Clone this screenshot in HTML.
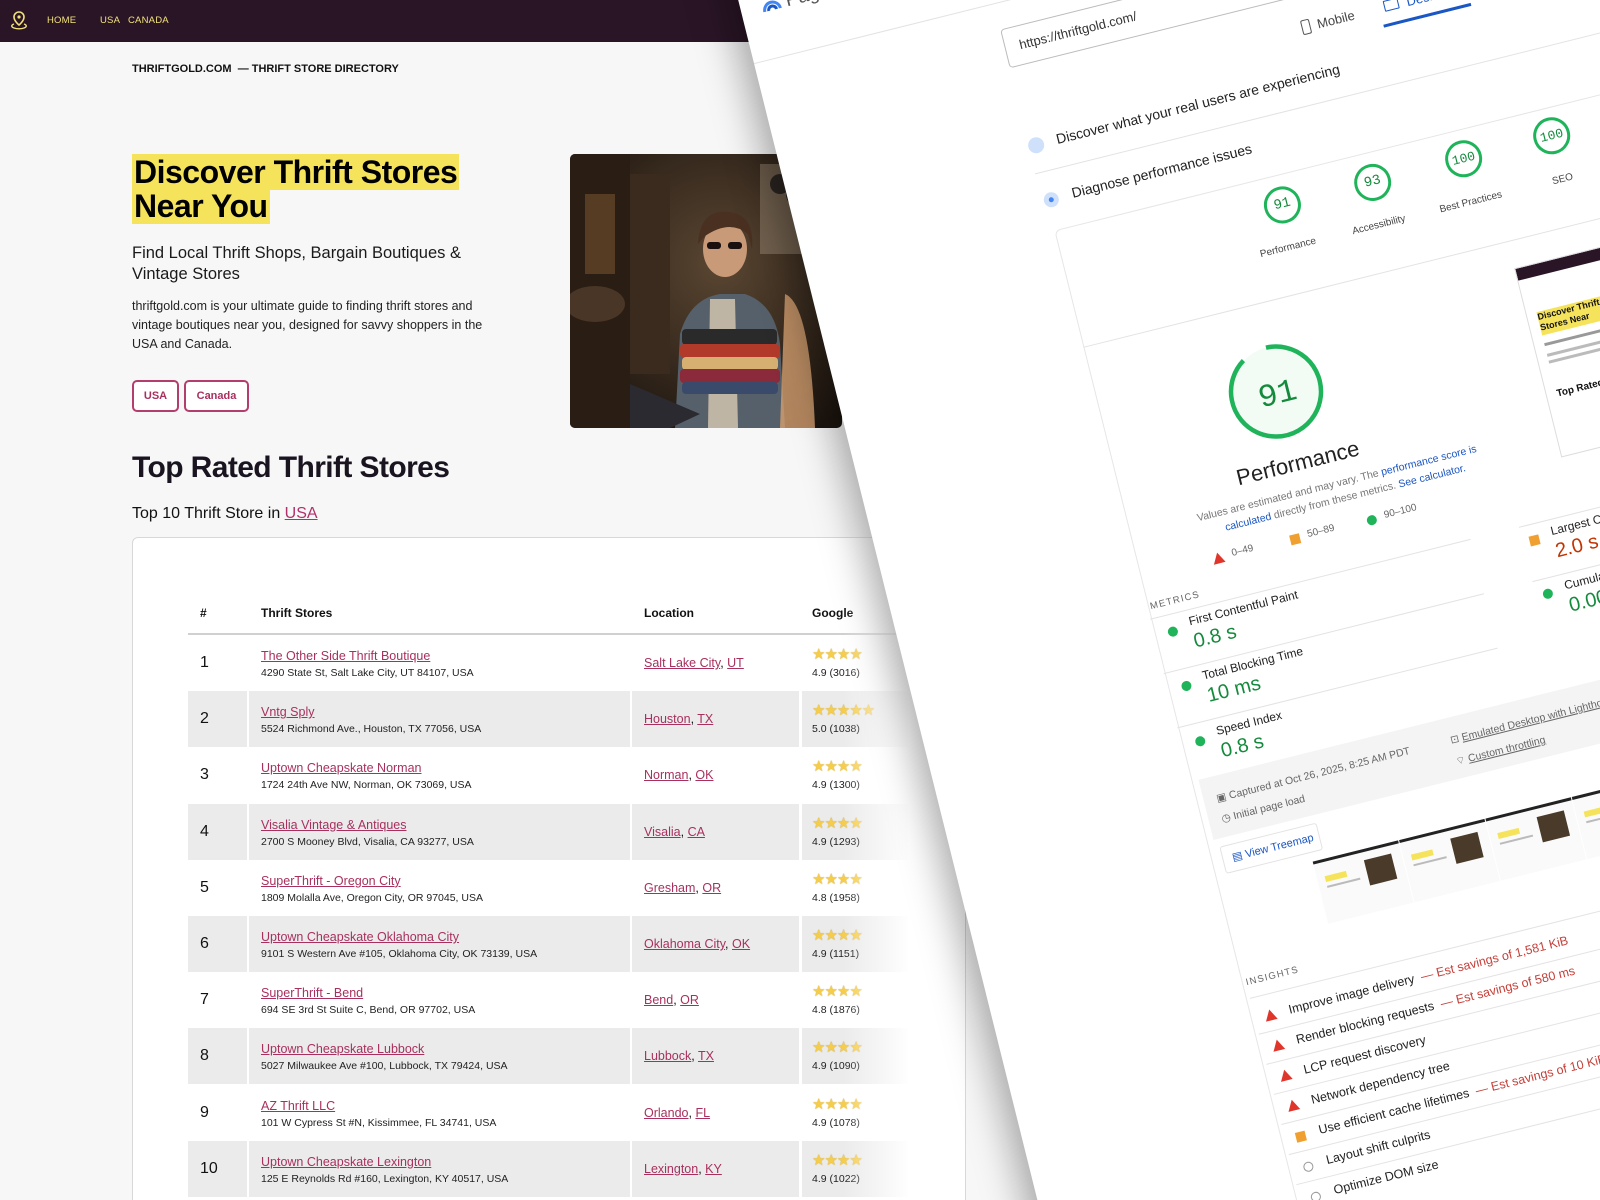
<!DOCTYPE html>
<html><head><meta charset="utf-8">
<style>
*{margin:0;padding:0;box-sizing:border-box}
html,body{width:1600px;height:1200px;overflow:hidden}
body{background:#f7f7f7;font-family:"Liberation Sans",sans-serif;color:#111}
#w{position:relative;width:1600px;height:1200px;overflow:hidden;background:#f7f7f7}
.a{position:absolute;white-space:nowrap}
.nav{position:absolute;left:0;top:0;width:1600px;height:42px;background:#2a1526}
.nav span{position:absolute;top:15px;font-size:9.5px;color:#f2e27a;letter-spacing:.2px}
.hl{background:#f6e35c}
.btn{position:absolute;top:380px;height:32px;border:2px solid #b33d6c;border-radius:5px;color:#a8305e;font-weight:bold;font-size:11px;text-align:center;line-height:28px;background:#fff}
.tcard{position:absolute;left:132px;top:537px;width:834px;height:663px;border:1px solid #d8d8d8;border-bottom:none;border-radius:6px 6px 0 0;background:#fff}
.row{position:absolute;left:188px;width:720px;height:56px}
.row.g .c{background:#ebebeb}
.c{position:absolute;top:0;height:56px}
.lk{color:#a8305e;text-decoration:underline;font-size:12.5px}
.ad{font-size:10.5px;color:#222}
.st{color:#f6cd4a;font-size:15px;letter-spacing:-1px;text-shadow:0 0 1px #b58a10}
.card{position:absolute;left:714px;top:-97px;width:1300px;height:1600px;background:#fff;transform-origin:0 0;transform:rotate(-14deg);box-shadow:-10px 0 40px rgba(0,0,0,.35)}
.card .a{color:#222}
.gz{position:absolute;border-radius:50%;border:3px solid #1fb35a;color:#148a3c;text-align:center;font-family:"Liberation Mono",monospace}
.dot{position:absolute;width:10px;height:10px;border-radius:50%;background:#1fb35a}
.tri{position:absolute;width:0;height:0;border-left:6px solid transparent;border-right:6px solid transparent;border-bottom:11px solid #e0352b}
.sq{position:absolute;width:10px;height:10px;background:#f0a030}
.ln{position:absolute;height:1px;background:#e3e3e3}
.sv{color:#c5403a}
.fr{position:absolute;top:1075px;width:88px;height:64px;background:#fafafa;border-top:3px solid #222}
.fr i{position:absolute;left:8px;top:14px;width:22px;height:6px;background:#f6e35c}
.fr b{position:absolute;left:50px;top:8px;width:28px;height:26px;background:#4a3a2a}
.fr u{position:absolute;left:8px;top:24px;width:34px;height:2px;background:#bbb}
</style></head><body><div id="w">

<div class="nav">
<svg style="position:absolute;left:9px;top:10px" width="20" height="22" viewBox="0 0 20 22"><path d="M10 2a5 5 0 0 0-5 5c0 4 5 8 5 8s5-4 5-8a5 5 0 0 0-5-5z" fill="none" stroke="#f2e27a" stroke-width="1.6"/><circle cx="10" cy="7" r="1.6" fill="#f2e27a"/><path d="M5 14c-3 1-3 3 0 4s7 1 10 0 3-3 0-4" fill="none" stroke="#f2e27a" stroke-width="1.4"/></svg>
<span style="left:47px">HOME</span><span style="left:100px">USA</span><span style="left:128px">CANADA</span>
</div>

<div class="a" style="left:132px;top:63px;font-size:11px;font-weight:bold;color:#111">THRIFTGOLD.COM &nbsp;— THRIFT STORE DIRECTORY</div>

<div class="a" style="left:132px;top:155px;font-size:32px;font-weight:900;line-height:34px;letter-spacing:-0.5px;color:#000">
<span class="hl" style="padding:0 2px">Discover Thrift Stores</span><br><span class="hl" style="padding:0 2px">Near You</span></div>

<div class="a" style="left:132px;top:243px;font-size:16.5px;line-height:21px;color:#1a1a1a">Find Local Thrift Shops, Bargain Boutiques &amp;<br>Vintage Stores</div>
<div class="a" style="left:132px;top:297px;font-size:12.5px;line-height:19px;color:#222">thriftgold.com is your ultimate guide to finding thrift stores and<br>vintage boutiques near you, designed for savvy shoppers in the<br>USA and Canada.</div>
<div class="btn" style="left:132px;width:47px">USA</div>
<div class="btn" style="left:184px;width:65px">Canada</div>

<svg style="position:absolute;left:570px;top:154px;border-radius:5px" width="272" height="274" viewBox="0 0 272 274">
<defs><radialGradient id="bg" cx="55%" cy="40%" r="70%"><stop offset="0" stop-color="#5a4632"/><stop offset="1" stop-color="#1c140e"/></radialGradient></defs>
<rect width="272" height="274" fill="url(#bg)"/>
<rect x="0" y="0" width="60" height="274" fill="#2a1d14"/>
<rect x="15" y="40" width="30" height="80" fill="#6a4a2a" opacity=".7"/>
<ellipse cx="25" cy="150" rx="30" ry="18" fill="#4a3626"/>
<rect x="60" y="20" width="40" height="200" fill="#3b2a1e"/>
<rect x="190" y="10" width="80" height="90" fill="#8a7a66" opacity=".6"/>
<circle cx="230" cy="40" r="14" fill="#1a1410"/><circle cx="210" cy="30" r="10" fill="#2a2420"/>
<path d="M105 274 L110 180 Q120 145 150 140 L175 140 Q205 150 210 190 L215 274Z" fill="#56606a"/>
<path d="M140 145 L165 145 L168 274 L138 274Z" fill="#bfb5a5"/>
<ellipse cx="155" cy="95" rx="22" ry="28" fill="#c89a78"/>
<path d="M128 90 Q130 55 158 58 Q185 60 182 95 L178 80 Q160 65 135 82Z" fill="#4a3020"/>
<rect x="137" y="88" width="14" height="7" rx="3" fill="#1a1010"/><rect x="158" y="88" width="14" height="7" rx="3" fill="#1a1010"/>
<rect x="112" y="175" width="95" height="16" rx="4" fill="#2a2a2a"/>
<rect x="110" y="190" width="100" height="14" rx="4" fill="#b23a2a"/>
<rect x="112" y="203" width="96" height="13" rx="4" fill="#d6b070"/>
<rect x="110" y="215" width="100" height="14" rx="4" fill="#8a2a3a"/>
<rect x="112" y="228" width="96" height="12" rx="4" fill="#3a4a6a"/>
<path d="M215 140 Q240 150 245 274 L210 274Z" fill="#d4a070" opacity=".8"/>
<path d="M60 230 L130 260 L100 274 L60 274Z" fill="#2a2a30"/>
</svg>

<div class="a" style="left:132px;top:451px;font-size:30px;font-weight:900;letter-spacing:-0.6px;color:#1a1320">Top Rated Thrift Stores</div>
<div class="a" style="left:132px;top:505px;font-size:16px;color:#111">Top 10 Thrift Store in <span style="color:#b0306a;text-decoration:underline">USA</span></div>

<div class="tcard"></div>
<div class="a" style="left:200px;top:606px;font-size:12px;font-weight:bold">#</div>
<div class="a" style="left:261px;top:606px;font-size:12px;font-weight:bold">Thrift Stores</div>
<div class="a" style="left:644px;top:606px;font-size:12px;font-weight:bold">Location</div>
<div class="a" style="left:812px;top:606px;font-size:12px;font-weight:bold">Google</div>
<div style="position:absolute;left:188px;top:633px;width:720px;height:2px;background:#d0d0d0"></div>

<div id="rows"></div>
<script>
var d=[["The Other Side Thrift Boutique","4290 State St, Salt Lake City, UT 84107, USA","Salt Lake City","UT","4.9 (3016)",4],
["Vntg Sply","5524 Richmond Ave., Houston, TX 77056, USA","Houston","TX","5.0 (1038)",5],
["Uptown Cheapskate Norman","1724 24th Ave NW, Norman, OK 73069, USA","Norman","OK","4.9 (1300)",4],
["Visalia Vintage &amp; Antiques","2700 S Mooney Blvd, Visalia, CA 93277, USA","Visalia","CA","4.9 (1293)",4],
["SuperThrift - Oregon City","1809 Molalla Ave, Oregon City, OR 97045, USA","Gresham","OR","4.8 (1958)",4],
["Uptown Cheapskate Oklahoma City","9101 S Western Ave #105, Oklahoma City, OK 73139, USA","Oklahoma City","OK","4.9 (1151)",4],
["SuperThrift - Bend","694 SE 3rd St Suite C, Bend, OR 97702, USA","Bend","OR","4.8 (1876)",4],
["Uptown Cheapskate Lubbock","5027 Milwaukee Ave #100, Lubbock, TX 79424, USA","Lubbock","TX","4.9 (1090)",4],
["AZ Thrift LLC","101 W Cypress St #N, Kissimmee, FL 34741, USA","Orlando","FL","4.9 (1078)",4],
["Uptown Cheapskate Lexington","125 E Reynolds Rd #160, Lexington, KY 40517, USA","Lexington","KY","4.9 (1022)",4]];
var h="";
for(var i=0;i<10;i++){var r=d[i],t=635+i*56.2;
h+='<div class="row'+(i%2?' g':'')+'" style="top:'+t+'px">'+
'<div class="c" style="left:0;width:59px"><span class="a" style="left:12px;top:19px;font-size:16px">'+(i+1)+'</span></div>'+
'<div class="c" style="left:61px;width:381px"><span class="a lk" style="left:12px;top:14px">'+r[0]+'</span><span class="a ad" style="left:12px;top:32px">'+r[1]+'</span></div>'+
'<div class="c" style="left:444px;width:167px"><span class="a" style="left:12px;top:21px;font-size:12.5px"><span class="lk">'+r[2]+'</span>, <span class="lk">'+r[3]+'</span></span></div>'+
'<div class="c" style="left:614px;width:106px"><span class="a st" style="left:10px;top:10px">'+"★★★★★".slice(0,r[5])+'</span><span class="a ad" style="left:10px;top:32px">'+r[4]+'</span></div></div>';}
document.getElementById("rows").innerHTML=h;
</script>
<div style="position:absolute;left:700px;top:42px;width:260px;height:1158px;background:linear-gradient(to right,rgba(255,255,255,0) 0,rgba(255,255,255,0) 55%,rgba(255,255,255,.95) 80%,#fff 100%)"></div>

<div class="card">
  <svg style="position:absolute;left:20px;top:104px" width="22" height="22" viewBox="0 0 22 22"><path d="M3 14a8 8 0 0 1 16 0" fill="none" stroke="#4285f4" stroke-width="3"/><path d="M7 14a4 4 0 0 1 8 0" fill="none" stroke="#1a56c4" stroke-width="3"/></svg>
  <div class="a" style="left:46px;top:102px;font-size:19px;color:#555">PageSpeed Insights</div>
  <div class="ln" style="left:0;top:165px;width:1300px"></div>
  <div class="a" style="left:247px;top:136px;font-size:20px;color:#222">Report from Oct 26, 2025, 8:25 AM PDT</div>
  <div style="position:absolute;left:247px;top:192px;width:300px;height:40px;border:1px solid #bbb;border-radius:4px"></div>
  <div class="a" style="left:262px;top:204px;font-size:13px;color:#333">https://thriftgold.com/</div>
  <div style="position:absolute;left:540px;top:256px;width:9px;height:15px;border:1.5px solid #555;border-radius:2px"></div>
  <div class="a" style="left:556px;top:256px;font-size:13px;color:#444">Mobile</div>
  <div style="position:absolute;left:625px;top:257px;width:15px;height:11px;border:1.5px solid #1a56c4;border-radius:1px"></div>
  <div class="a" style="left:648px;top:256px;font-size:13px;color:#1a56c4">Desktop</div>
  <div style="position:absolute;left:620px;top:280px;width:90px;height:3px;background:#1a56c4"></div>

  <div style="position:absolute;left:246px;top:305px;width:16px;height:16px;border-radius:50%;background:#cfe0fb"></div>
  <div class="a" style="left:275px;top:304px;font-size:14px">Discover what your real users are experiencing</div>
  <div class="ln" style="left:246px;top:340px;width:900px"></div>
  <div style="position:absolute;left:248px;top:362px;width:15px;height:15px;border-radius:50%;background:#cfe0fb"><div style="margin:5px;width:5px;height:5px;border-radius:50%;background:#4285f4"></div></div>
  <div class="a" style="left:277px;top:360px;font-size:14px">Diagnose performance issues</div>

  <div class="gz" style="left:460px;top:412px;width:37px;height:37px;line-height:31px;font-size:14px">91</div>
  <div class="a" style="left:445px;top:468px;font-size:10px;color:#444">Performance</div>
  <div class="gz" style="left:553px;top:412px;width:37px;height:37px;line-height:31px;font-size:14px">93</div>
  <div class="a" style="left:540px;top:468px;font-size:10px;color:#444">Accessibility</div>
  <div class="gz" style="left:647px;top:411px;width:37px;height:37px;line-height:31px;font-size:13px">100</div>
  <div class="a" style="left:630px;top:468px;font-size:10px;color:#444">Best Practices</div>
  <div class="gz" style="left:738px;top:410px;width:37px;height:37px;line-height:31px;font-size:13px">100</div>
  <div class="a" style="left:746px;top:468px;font-size:10px;color:#444">SEO</div>

  <div style="position:absolute;left:251px;top:400px;width:900px;height:1200px;border:1px solid #e6e6e6;border-radius:6px"></div>
  <div class="ln" style="left:251px;top:520px;width:900px"></div>

  <svg style="position:absolute;left:378px;top:560px" width="100" height="100" viewBox="0 0 100 100"><circle cx="50" cy="50" r="45" fill="#f3fbf5"/><path d="M50 5 A45 45 0 1 1 25 12" fill="none" stroke="#1fb35a" stroke-width="4.5"/><text x="50" y="62" text-anchor="middle" font-family="Liberation Mono,monospace" font-size="32" fill="#148a3c">91</text></svg>
  <div class="a" style="left:368px;top:672px;font-size:22px;color:#222">Performance</div>
  <div class="a" style="left:320px;top:708px;font-size:10.5px;color:#777">Values are estimated and may vary. The <span style="color:#1a56c4">performance score is</span></div>
  <div class="a" style="left:345px;top:724px;font-size:10.5px;color:#777"><span style="color:#1a56c4">calculated</span> directly from these metrics. <span style="color:#1a56c4">See calculator.</span></div>
  <div class="tri" style="left:325px;top:752px"></div><div class="a" style="left:345px;top:751px;font-size:10px;color:#666">0–49</div>
  <div class="sq" style="left:405px;top:753px"></div><div class="a" style="left:423px;top:751px;font-size:10px;color:#666">50–89</div>
  <div class="dot" style="left:484px;top:753px"></div><div class="a" style="left:502px;top:751px;font-size:10px;color:#666">90–100</div>

  <div style="position:absolute;left:688px;top:548px;width:170px;height:195px;border:1px solid #ddd;background:#fff;overflow:hidden">
    <div style="height:12px;background:#2a1526"></div>
    <div style="margin:35px 0 0 10px;width:80px;height:24px;background:#f6e35c;font-size:9px;font-weight:900;line-height:11px">Discover Thrift Stores Near</div>
    <div style="margin:8px 10px;height:3px;background:#999;width:70px"></div><div style="margin:4px 10px;height:3px;background:#bbb;width:90px"></div><div style="margin:4px 10px;height:3px;background:#bbb;width:85px"></div>
    <div style="margin:26px 10px 0;font-size:10px;font-weight:900">Top Rated</div>
  </div>

  <div class="a" style="left:253px;top:783px;font-size:9.5px;letter-spacing:1.2px;color:#666">METRICS</div>
  <div class="ln" style="left:250px;top:800px;width:330px"></div>
  <div class="dot" style="left:264px;top:813px"></div>
  <div class="a" style="left:287px;top:805px;font-size:12px">First Contentful Paint</div>
  <div class="a" style="left:287px;top:822px;font-size:20px;color:#148a3c">0.8 s</div>
  <div class="ln" style="left:250px;top:856px;width:330px"></div>
  <div class="dot" style="left:264px;top:869px"></div>
  <div class="a" style="left:287px;top:861px;font-size:12px">Total Blocking Time</div>
  <div class="a" style="left:287px;top:878px;font-size:20px;color:#148a3c">10 ms</div>
  <div class="ln" style="left:250px;top:912px;width:330px"></div>
  <div class="dot" style="left:264px;top:926px"></div>
  <div class="a" style="left:287px;top:918px;font-size:12px">Speed Index</div>
  <div class="a" style="left:287px;top:935px;font-size:20px;color:#148a3c">0.8 s</div>

  <div class="ln" style="left:630px;top:800px;width:330px"></div>
  <div class="sq" style="left:637px;top:812px"></div>
  <div class="a" style="left:660px;top:805px;font-size:12px">Largest Contentful Paint</div>
  <div class="a" style="left:660px;top:822px;font-size:20px;color:#c33300">2.0 s</div>
  <div class="ln" style="left:630px;top:856px;width:330px"></div>
  <div class="dot" style="left:637px;top:867px"></div>
  <div class="a" style="left:660px;top:861px;font-size:12px">Cumulative Layout Shift</div>
  <div class="a" style="left:660px;top:878px;font-size:20px;color:#148a3c">0.001</div>

  <div style="position:absolute;left:258px;top:968px;width:700px;height:62px;background:#f4f4f4"></div>
  <div class="a" style="left:271px;top:985px;font-size:10.5px;color:#666">▣ Captured at Oct 26, 2025, 8:25 AM PDT</div>
  <div class="a" style="left:271px;top:1006px;font-size:10.5px;color:#666">◷ Initial page load</div>
  <div class="a" style="left:512px;top:985px;font-size:10.5px;color:#666">⊡ <u>Emulated Desktop with Lighthouse 12.8.2</u></div>
  <div class="a" style="left:512px;top:1006px;font-size:10.5px;color:#666">⌔ <u>Custom throttling</u></div>

  <div style="position:absolute;left:262px;top:1038px;width:100px;height:28px;border:1px solid #e3e3e3;border-radius:3px"></div>
  <div class="a" style="left:272px;top:1045px;font-size:11px;color:#1a56c4">▤ View Treemap</div>

  <div class="fr" style="left:349px"><i></i><b></b><u></u></div>
  <div class="fr" style="left:438px"><i></i><b></b><u></u></div>
  <div class="fr" style="left:527px"><i></i><b></b><u></u></div>
  <div class="fr" style="left:616px"><i></i><b></b><u></u></div>

  <div class="a" style="left:255px;top:1171px;font-size:9.5px;letter-spacing:1.2px;color:#666">INSIGHTS</div>
  <div class="ln" style="left:255px;top:1192px;width:700px"></div>
  <div class="tri" style="left:265px;top:1208px"></div><div class="a" style="left:290px;top:1206px;font-size:12.5px">Improve image delivery <span class="sv">&nbsp;— Est savings of 1,581 KiB</span></div>
  <div class="ln" style="left:255px;top:1229px;width:700px"></div>
  <div class="tri" style="left:265px;top:1239px"></div><div class="a" style="left:290px;top:1237px;font-size:12.5px">Render blocking requests <span class="sv">&nbsp;— Est savings of 580 ms</span></div>
  <div class="ln" style="left:255px;top:1260px;width:700px"></div>
  <div class="tri" style="left:265px;top:1270px"></div><div class="a" style="left:290px;top:1268px;font-size:12.5px">LCP request discovery</div>
  <div class="ln" style="left:255px;top:1291px;width:700px"></div>
  <div class="tri" style="left:265px;top:1301px"></div><div class="a" style="left:290px;top:1299px;font-size:12.5px">Network dependency tree</div>
  <div class="ln" style="left:255px;top:1322px;width:700px"></div>
  <div class="sq" style="left:266px;top:1334px"></div><div class="a" style="left:290px;top:1330px;font-size:12.5px">Use efficient cache lifetimes <span class="sv">&nbsp;— Est savings of 10 KiB</span></div>
  <div class="ln" style="left:255px;top:1353px;width:700px"></div>
  <div style="position:absolute;left:266px;top:1365px;width:10px;height:10px;border-radius:50%;border:1.5px solid #999"></div><div class="a" style="left:290px;top:1361px;font-size:12.5px">Layout shift culprits</div>
  <div class="ln" style="left:255px;top:1384px;width:700px"></div>
  <div style="position:absolute;left:266px;top:1396px;width:10px;height:10px;border-radius:50%;border:1.5px solid #999"></div><div class="a" style="left:290px;top:1392px;font-size:12.5px">Optimize DOM size</div>
</div>
</div></body></html>
